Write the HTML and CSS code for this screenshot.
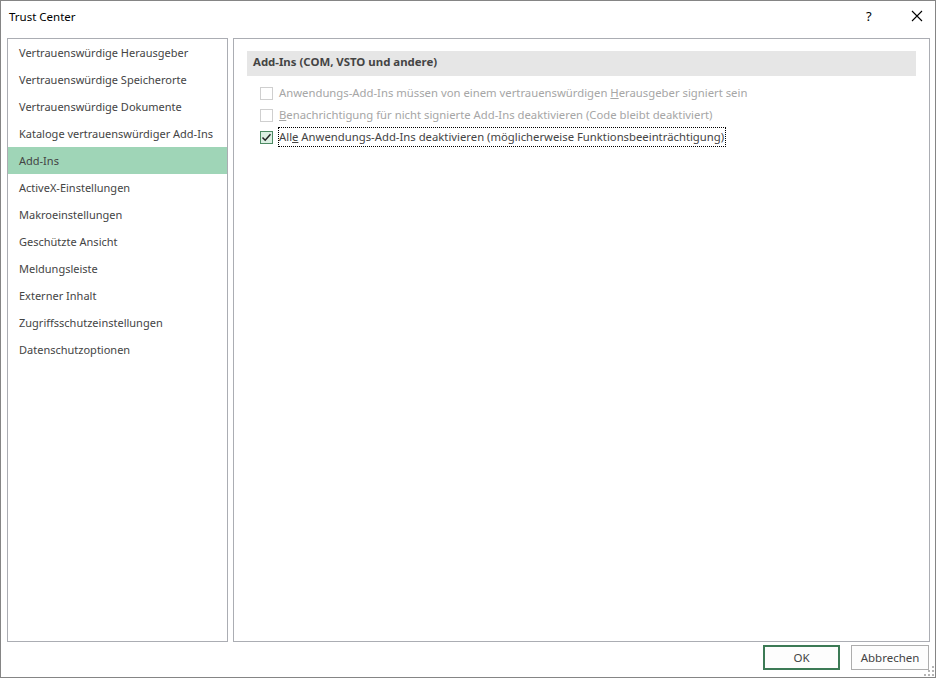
FILE: index.html
```html
<!DOCTYPE html>
<html lang="de">
<head>
<meta charset="utf-8">
<title>Trust Center</title>
<link rel="stylesheet" href="styles.css">
</head>
<body>
<div class="window">
  <div class="titlebar">
    <span class="title">Trust Center</span>
    <span class="help">?</span>
    <span class="close">
      <svg width="12" height="12" viewBox="0 0 12 12"><path d="M1 1 L11 11 M11 1 L1 11" stroke="#000" stroke-width="1.1" fill="none"/></svg>
    </span>
  </div>
  <div class="content">
    <div class="nav pane">
      <div class="nav-item">Vertrauenswürdige Herausgeber</div>
      <div class="nav-item">Vertrauenswürdige Speicherorte</div>
      <div class="nav-item">Vertrauenswürdige Dokumente</div>
      <div class="nav-item">Kataloge vertrauenswürdiger Add-Ins</div>
      <div class="nav-item selected">Add-Ins</div>
      <div class="nav-item">ActiveX-Einstellungen</div>
      <div class="nav-item">Makroeinstellungen</div>
      <div class="nav-item">Geschützte Ansicht</div>
      <div class="nav-item">Meldungsleiste</div>
      <div class="nav-item">Externer Inhalt</div>
      <div class="nav-item">Zugriffsschutzeinstellungen</div>
      <div class="nav-item">Datenschutzoptionen</div>
    </div>
    <div class="main pane">
      <div class="section-header">Add-Ins (COM, VSTO und andere)</div>
      <div class="options">
        <div class="option disabled">
          <span class="box"></span>
          <span class="label">Anwendungs-Add-Ins müssen von einem vertrauenswürdigen <u>H</u>erausgeber signiert sein</span>
        </div>
        <div class="option disabled">
          <span class="box"></span>
          <span class="label"><u>B</u>enachrichtigung für nicht signierte Add-Ins deaktivieren (Code bleibt deaktiviert)</span>
        </div>
        <div class="option">
          <span class="box checked">
            <svg width="11" height="11" viewBox="0 0 11 11"><path d="M1.5 5.5 L4.2 8.2 L9.5 2.2" stroke="#222" stroke-width="1.5" fill="none"/></svg>
          </span>
          <span class="label focus">All<u>e</u> Anwendungs-Add-Ins deaktivieren (möglicherweise Funktionsbeeinträchtigung)</span>
        </div>
      </div>
    </div>
  </div>
  <div class="footer">
    <button class="btn default">OK</button>
    <button class="btn">Abbrechen</button>
    <span class="grip">
      <svg width="10" height="10" viewBox="0 0 10 10" fill="#b5b5b5"><rect x="8" y="0" width="2" height="2"/><rect x="4" y="4" width="2" height="2"/><rect x="8" y="4" width="2" height="2"/><rect x="0" y="8" width="2" height="2"/><rect x="4" y="8" width="2" height="2"/><rect x="8" y="8" width="2" height="2"/></svg>
    </span>
  </div>
</div>
</body>
</html>
```
FILE: styles.css
```css
* { box-sizing: border-box; }
html, body { margin: 0; padding: 0; }
body {
  font-family: "Noto Sans", "Open Sans", sans-serif;
  font-size: 11px;
  color: #444;
  background: #fff;
}
.window {
  width: 936px;
  height: 678px;
  border: 1px solid #858585;
  background: #fff;
  display: flex;
  flex-direction: column;
}
.titlebar {
  height: 37px;
  display: flex;
  align-items: center;
  padding-left: 8px;
  padding-bottom: 7px;
}
.title { color: #000; flex: 1; font-size: 11.5px; }
.help { color: #000; width: 12px; margin-right: 33px; font-size: 13px; }
.close { width: 12px; margin-right: 12px; display: flex; }
.content {
  display: flex;
  gap: 5px;
  padding: 0 5px 0 6px;
  height: 604px;
}
.pane {
  border: 1px solid #abadb3;
  background: #fff;
}
.nav { width: 221px; flex: none; }
.nav-item {
  height: 27px;
  line-height: 27px;
  padding-left: 11px;
  white-space: nowrap;
}
.nav-item.selected { background: #9fd5b7; }
.main { flex: 1; padding: 12px 13px 0 13px; font-size: 11.3px; }
.section-header {
  height: 25px;
  line-height: 22px;
  background: #e6e6e6;
  padding-left: 6px;
  font-weight: bold;
  font-size: 11.4px;
  color: #444;
}
.options { padding: 6px 0 0 13px; }
.option {
  height: 22px;
  display: flex;
  align-items: center;
  gap: 6px;
}
.box {
  width: 13px;
  height: 13px;
  border: 1px solid #333;
  background: #fff;
  flex: none;
  display: flex;
  align-items: center;
  justify-content: center;
}
.option.disabled .box { border-color: #cfcfcf; }
.option.disabled .label { color: #a6a6a6; }
.box.checked { background: #dcefe3; border-color: #4d8a63; }
.label { white-space: nowrap; line-height: 16px; }
.label.focus { outline: 1px dotted #000; outline-offset: 0; padding: 1px 1px 1px 0; }
.footer {
  flex: 1;
  display: flex;
  justify-content: flex-end;
  align-items: flex-start;
  padding: 3px 6px 0 0;
  gap: 11px;
  position: relative;
}
.btn {
  font-family: inherit;
  font-size: 11.5px;
  color: #444;
  height: 25px;
  background: #fdfdfd;
  border: 1px solid #adadad;
  padding: 0;
  margin: 0;
  width: 78px;
}
.btn.default { border: 2px solid #3c7a55; width: 77px; }
.grip { position: absolute; right: 1px; bottom: 1px; display: flex; }
```
